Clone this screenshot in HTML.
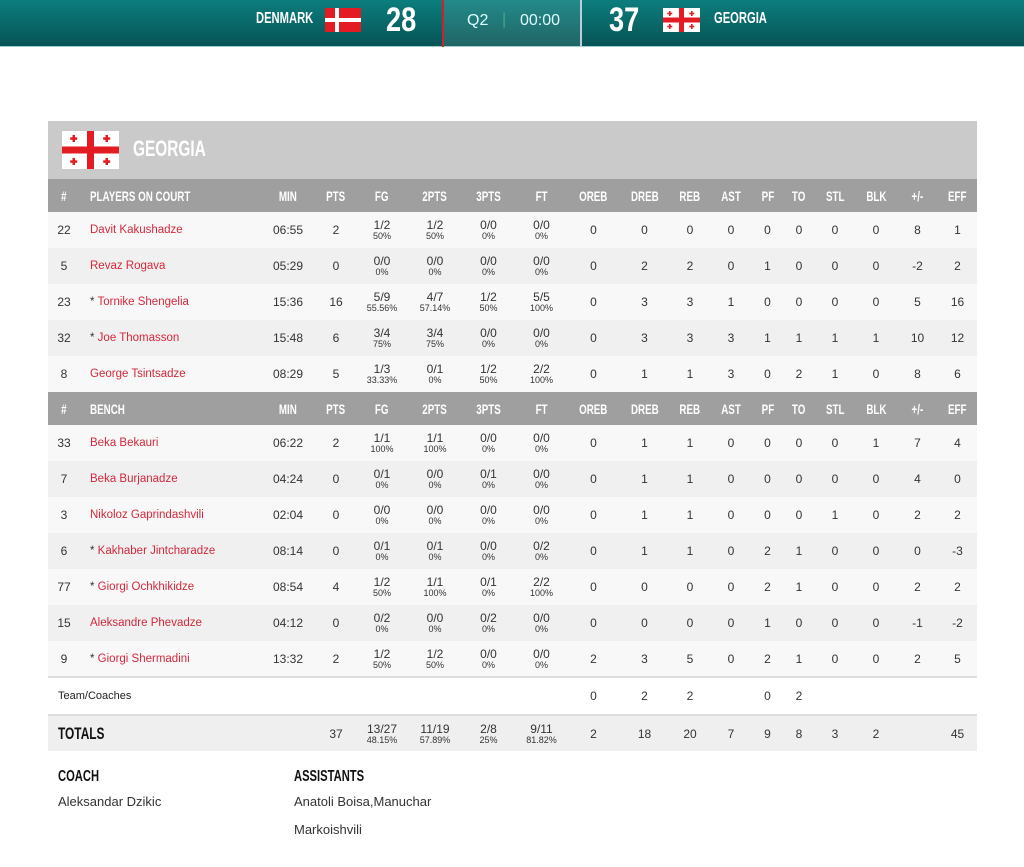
<!DOCTYPE html>
<html><head><meta charset="utf-8"><style>
*{margin:0;padding:0;box-sizing:border-box}
body{width:1024px;height:867px;background:#fff;font-family:"Liberation Sans",sans-serif;color:#333;position:relative;overflow:hidden}
.top{position:absolute;left:0;top:0;width:1024px;height:47px;background:linear-gradient(#0c7d7d,#075455);border-bottom:1px solid #9cc}
.cond{font-family:"Liberation Sans",sans-serif;font-weight:bold;display:inline-block;transform:scaleX(.7);transform-origin:left center;white-space:nowrap}
.cc{display:inline-block;transform:scaleX(.7);transform-origin:center;white-space:nowrap}
.tn{position:absolute;color:#fff;font-size:16px;top:10px}
.sc{position:absolute;color:#fff;font-size:34px;top:1px;font-weight:bold;display:inline-block;transform:scaleX(.8);transform-origin:left}
.mid{position:absolute;left:442px;top:0;width:140px;height:47px;background:rgba(255,255,255,.1);border-left:2px solid #d0202f;border-right:2px solid #bcd;color:#dff;font-size:16px}
.flag{position:absolute}
.team{position:absolute;left:48px;top:121px;width:929px;height:58px;background:#cacaca}
table{position:absolute;left:48px;top:179px;width:929px;border-collapse:collapse;table-layout:fixed;font-size:12px}
td{text-align:center;height:36px;padding:0;vertical-align:middle;white-space:nowrap}
tr.h td{background:#9f9f9f;color:#fff;height:33px;font-weight:bold;font-size:14px}
tr.h td.n{text-align:left;padding-left:10px}
tr.r:nth-child(odd) td{background:#f0f0f0}
tr.r td{background:#f8f8f8}
td.n{text-align:left;padding-left:10px;color:#d3283c;font-size:11.5px}
td small{display:block;font-size:9px;line-height:10px}
td .a{display:block;line-height:12px}
tr.t td{background:#fff;border-top:2px solid #ddd;height:38px}
tr.tot td{background:#efefef;border-top:2px solid #ddd;height:36px}
.lbl{position:absolute;font-size:16px;color:#111}
.txt{position:absolute;font-size:13px;color:#333}
</style></head><body>
<div class="top">
 <div class="tn cond" style="left:256px">DENMARK</div>
 <svg class="flag" style="left:325px;top:8px" width="36" height="24"><rect width="36" height="24" fill="#e31b23"/><rect x="10" width="4" height="24" fill="#fff"/><rect y="10" width="36" height="4" fill="#fff"/></svg>
 <div class="sc" style="left:386px">28</div>
 <div class="mid"><span style="position:absolute;left:23px;top:12px">Q2</span><span style="position:absolute;left:58px;top:11px;color:#4a8">|</span><span style="position:absolute;left:76px;top:12px">00:00</span></div>
 <div class="sc" style="left:609px">37</div>
 <svg class="flag" style="left:663px;top:8px" width="37" height="24"><rect width="37" height="24" fill="#fff"/><rect x="16" width="5" height="24" fill="#e31b23"/><rect y="9.5" width="37" height="5" fill="#e31b23"/><g fill="#e31b23"><rect x="6" y="3" width="1.6" height="5"/><rect x="4.3" y="4.7" width="5" height="1.6"/><rect x="28" y="3" width="1.6" height="5"/><rect x="26.3" y="4.7" width="5" height="1.6"/><rect x="6" y="16" width="1.6" height="5"/><rect x="4.3" y="17.7" width="5" height="1.6"/><rect x="28" y="16" width="1.6" height="5"/><rect x="26.3" y="17.7" width="5" height="1.6"/></g></svg>
 <div class="tn cond" style="left:714px">GEORGIA</div>
</div>
<div class="team">
 <svg style="position:absolute;left:14px;top:10px" width="57" height="38"><rect width="57" height="38" fill="#fff"/><rect x="25" width="7" height="38" fill="#e31b23"/><rect y="15.5" width="57" height="7" fill="#e31b23"/><g fill="#e31b23"><rect x="10.5" y="4" width="2.5" height="7"/><rect x="8.2" y="6.3" width="7" height="2.5"/><rect x="43.5" y="4" width="2.5" height="7"/><rect x="41.2" y="6.3" width="7" height="2.5"/><rect x="10.5" y="27" width="2.5" height="7"/><rect x="8.2" y="29.3" width="7" height="2.5"/><rect x="43.5" y="27" width="2.5" height="7"/><rect x="41.2" y="29.3" width="7" height="2.5"/></g></svg>
 <div class="cond" style="position:absolute;left:85px;top:15px;color:#fff;font-size:22px">GEORGIA</div>
</div>
<table>
<colgroup><col style="width:32px"><col style="width:180px"><col style="width:56px"><col style="width:40px"><col style="width:52px"><col style="width:54px"><col style="width:53px"><col style="width:53px"><col style="width:51px"><col style="width:51px"><col style="width:40px"><col style="width:42px"><col style="width:31px"><col style="width:32px"><col style="width:40px"><col style="width:42px"><col style="width:41px"><col style="width:39px"></colgroup>
<tr class="h"><td><span class="cc">#</span></td><td class="n"><span class="cond">PLAYERS ON COURT</span></td><td><span class="cc">MIN</span></td><td><span class="cc">PTS</span></td><td><span class="cc">FG</span></td><td><span class="cc">2PTS</span></td><td><span class="cc">3PTS</span></td><td><span class="cc">FT</span></td><td><span class="cc">OREB</span></td><td><span class="cc">DREB</span></td><td><span class="cc">REB</span></td><td><span class="cc">AST</span></td><td><span class="cc">PF</span></td><td><span class="cc">TO</span></td><td><span class="cc">STL</span></td><td><span class="cc">BLK</span></td><td><span class="cc">+/-</span></td><td><span class="cc">EFF</span></td></tr>
<tr class="r"><td>22</td><td class="n">Davit Kakushadze</td><td>06:55</td><td>2</td><td><span class="a">1/2</span><small>50%</small></td><td><span class="a">1/2</span><small>50%</small></td><td><span class="a">0/0</span><small>0%</small></td><td><span class="a">0/0</span><small>0%</small></td><td>0</td><td>0</td><td>0</td><td>0</td><td>0</td><td>0</td><td>0</td><td>0</td><td>8</td><td>1</td></tr>
<tr class="r"><td>5</td><td class="n">Revaz Rogava</td><td>05:29</td><td>0</td><td><span class="a">0/0</span><small>0%</small></td><td><span class="a">0/0</span><small>0%</small></td><td><span class="a">0/0</span><small>0%</small></td><td><span class="a">0/0</span><small>0%</small></td><td>0</td><td>2</td><td>2</td><td>0</td><td>1</td><td>0</td><td>0</td><td>0</td><td>-2</td><td>2</td></tr>
<tr class="r"><td>23</td><td class="n"><span style="color:#333">* </span>Tornike Shengelia</td><td>15:36</td><td>16</td><td><span class="a">5/9</span><small>55.56%</small></td><td><span class="a">4/7</span><small>57.14%</small></td><td><span class="a">1/2</span><small>50%</small></td><td><span class="a">5/5</span><small>100%</small></td><td>0</td><td>3</td><td>3</td><td>1</td><td>0</td><td>0</td><td>0</td><td>0</td><td>5</td><td>16</td></tr>
<tr class="r"><td>32</td><td class="n"><span style="color:#333">* </span>Joe Thomasson</td><td>15:48</td><td>6</td><td><span class="a">3/4</span><small>75%</small></td><td><span class="a">3/4</span><small>75%</small></td><td><span class="a">0/0</span><small>0%</small></td><td><span class="a">0/0</span><small>0%</small></td><td>0</td><td>3</td><td>3</td><td>3</td><td>1</td><td>1</td><td>1</td><td>1</td><td>10</td><td>12</td></tr>
<tr class="r"><td>8</td><td class="n">George Tsintsadze</td><td>08:29</td><td>5</td><td><span class="a">1/3</span><small>33.33%</small></td><td><span class="a">0/1</span><small>0%</small></td><td><span class="a">1/2</span><small>50%</small></td><td><span class="a">2/2</span><small>100%</small></td><td>0</td><td>1</td><td>1</td><td>3</td><td>0</td><td>2</td><td>1</td><td>0</td><td>8</td><td>6</td></tr>
<tr class="h"><td><span class="cc">#</span></td><td class="n"><span class="cond">BENCH</span></td><td><span class="cc">MIN</span></td><td><span class="cc">PTS</span></td><td><span class="cc">FG</span></td><td><span class="cc">2PTS</span></td><td><span class="cc">3PTS</span></td><td><span class="cc">FT</span></td><td><span class="cc">OREB</span></td><td><span class="cc">DREB</span></td><td><span class="cc">REB</span></td><td><span class="cc">AST</span></td><td><span class="cc">PF</span></td><td><span class="cc">TO</span></td><td><span class="cc">STL</span></td><td><span class="cc">BLK</span></td><td><span class="cc">+/-</span></td><td><span class="cc">EFF</span></td></tr>
<tr class="r"><td>33</td><td class="n">Beka Bekauri</td><td>06:22</td><td>2</td><td><span class="a">1/1</span><small>100%</small></td><td><span class="a">1/1</span><small>100%</small></td><td><span class="a">0/0</span><small>0%</small></td><td><span class="a">0/0</span><small>0%</small></td><td>0</td><td>1</td><td>1</td><td>0</td><td>0</td><td>0</td><td>0</td><td>1</td><td>7</td><td>4</td></tr>
<tr class="r"><td>7</td><td class="n">Beka Burjanadze</td><td>04:24</td><td>0</td><td><span class="a">0/1</span><small>0%</small></td><td><span class="a">0/0</span><small>0%</small></td><td><span class="a">0/1</span><small>0%</small></td><td><span class="a">0/0</span><small>0%</small></td><td>0</td><td>1</td><td>1</td><td>0</td><td>0</td><td>0</td><td>0</td><td>0</td><td>4</td><td>0</td></tr>
<tr class="r"><td>3</td><td class="n">Nikoloz Gaprindashvili</td><td>02:04</td><td>0</td><td><span class="a">0/0</span><small>0%</small></td><td><span class="a">0/0</span><small>0%</small></td><td><span class="a">0/0</span><small>0%</small></td><td><span class="a">0/0</span><small>0%</small></td><td>0</td><td>1</td><td>1</td><td>0</td><td>0</td><td>0</td><td>1</td><td>0</td><td>2</td><td>2</td></tr>
<tr class="r"><td>6</td><td class="n"><span style="color:#333">* </span>Kakhaber Jintcharadze</td><td>08:14</td><td>0</td><td><span class="a">0/1</span><small>0%</small></td><td><span class="a">0/1</span><small>0%</small></td><td><span class="a">0/0</span><small>0%</small></td><td><span class="a">0/2</span><small>0%</small></td><td>0</td><td>1</td><td>1</td><td>0</td><td>2</td><td>1</td><td>0</td><td>0</td><td>0</td><td>-3</td></tr>
<tr class="r"><td>77</td><td class="n"><span style="color:#333">* </span>Giorgi Ochkhikidze</td><td>08:54</td><td>4</td><td><span class="a">1/2</span><small>50%</small></td><td><span class="a">1/1</span><small>100%</small></td><td><span class="a">0/1</span><small>0%</small></td><td><span class="a">2/2</span><small>100%</small></td><td>0</td><td>0</td><td>0</td><td>0</td><td>2</td><td>1</td><td>0</td><td>0</td><td>2</td><td>2</td></tr>
<tr class="r"><td>15</td><td class="n">Aleksandre Phevadze</td><td>04:12</td><td>0</td><td><span class="a">0/2</span><small>0%</small></td><td><span class="a">0/0</span><small>0%</small></td><td><span class="a">0/2</span><small>0%</small></td><td><span class="a">0/0</span><small>0%</small></td><td>0</td><td>0</td><td>0</td><td>0</td><td>1</td><td>0</td><td>0</td><td>0</td><td>-1</td><td>-2</td></tr>
<tr class="r"><td>9</td><td class="n"><span style="color:#333">* </span>Giorgi Shermadini</td><td>13:32</td><td>2</td><td><span class="a">1/2</span><small>50%</small></td><td><span class="a">1/2</span><small>50%</small></td><td><span class="a">0/0</span><small>0%</small></td><td><span class="a">0/0</span><small>0%</small></td><td>2</td><td>3</td><td>5</td><td>0</td><td>2</td><td>1</td><td>0</td><td>0</td><td>2</td><td>5</td></tr>
<tr class="t"><td colspan="2" style="text-align:left;padding-left:10px;font-size:11px;color:#222">Team/Coaches</td><td></td><td></td><td></td><td></td><td></td><td></td><td>0</td><td>2</td><td>2</td><td></td><td>0</td><td>2</td><td></td><td></td><td></td><td></td></tr>
<tr class="tot"><td colspan="2" style="text-align:left;padding-left:10px;font-size:17px;color:#111"><span class="cond">TOTALS</span></td><td></td><td>37</td><td><span class="a">13/27</span><small>48.15%</small></td><td><span class="a">11/19</span><small>57.89%</small></td><td><span class="a">2/8</span><small>25%</small></td><td><span class="a">9/11</span><small>81.82%</small></td><td>2</td><td>18</td><td>20</td><td>7</td><td>9</td><td>8</td><td>3</td><td>2</td><td></td><td>45</td></tr>
</table>
<div class="lbl cond" style="left:58px;top:768px">COACH</div>
<div class="txt" style="left:58px;top:794px">Aleksandar Dzikic</div>
<div class="lbl cond" style="left:294px;top:768px">ASSISTANTS</div>
<div class="txt" style="left:294px;top:794px">Anatoli Boisa,Manuchar</div>
<div class="txt" style="left:294px;top:822px">Markoishvili</div>
</body></html>
